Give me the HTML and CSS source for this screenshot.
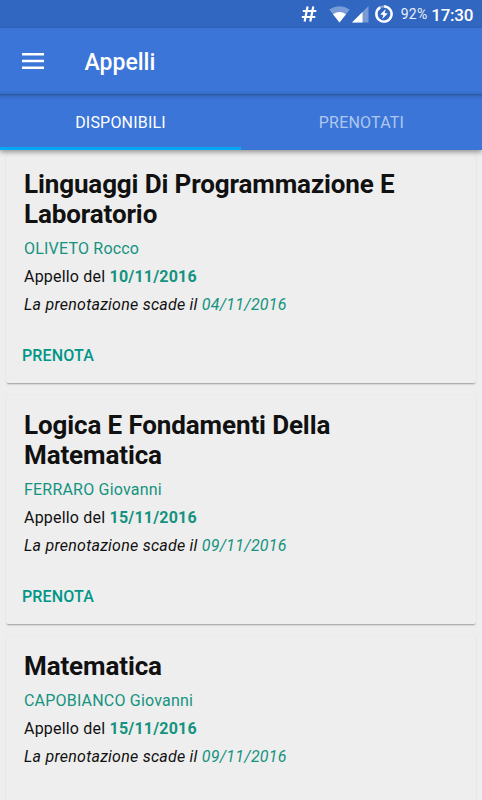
FILE: index.html
```html
<!DOCTYPE html>
<html lang="it">
<head>
    <meta charset="UTF-8">
    <meta name="viewport" content="width=device-width, initial-scale=1.0">
    <title>Appelli</title>
    <link rel="stylesheet" href="styles.css">
</head>
<body>
    <div class="status-bar">
        <svg class="icon-hash" width="16" height="18" viewBox="0 0 16 18">
            <path d="M6.6 1.5L3.6 16.5M12.3 1.5L9.3 16.5M1.8 6H15.3M.8 12H14.3" stroke="#fff" stroke-width="2.2" fill="none"/>
        </svg>
        <svg class="icon-wifi" width="21" height="17" viewBox="0 0 21 17">
            <path d="M10.5 16.5L.3 3.6Q10.5-3.2 20.7 3.6Z" fill="#fff" opacity=".35"/>
            <path d="M10.5 16.5L4 8.2Q10.5 4 17 8.2Z" fill="#fff"/>
        </svg>
        <svg class="icon-signal" width="17" height="17" viewBox="0 0 17 17">
            <path d="M0 16.5L16.5 0V16.5Z" fill="#fff" opacity=".35"/>
            <path d="M0 16.5L10.5 6V16.5Z" fill="#fff"/>
        </svg>
        <svg class="icon-battery" width="18" height="18" viewBox="0 0 18 18">
            <circle cx="9" cy="9" r="7.6" stroke="#fff" stroke-width="2.4" fill="none" opacity=".4"/>
            <path d="M9 1.4A7.6 7.6 0 1 1 5.2 2.4" stroke="#fff" stroke-width="2.4" fill="none"/>
            <path d="M10.8 4L5.2 9.6L8.3 10.1L7.2 14L12.8 8.4L9.7 7.9Z" fill="#fff"/>
        </svg>
        <span class="battery-level">92%</span>
        <span class="clock">17:30</span>
    </div>
    <header class="toolbar">
        <svg class="icon-menu" width="22" height="16" viewBox="0 0 22 16">
            <path d="M0 1.3H22M0 8H22M0 14.7H22" stroke="#fff" stroke-width="2.4"/>
        </svg>
        <h1>Appelli</h1>
    </header>
    <nav class="tabs">
        <div class="tab active">DISPONIBILI</div>
        <div class="tab">PRENOTATI</div>
    </nav>
    <main class="card-list">
        <div class="card">
            <h2>Linguaggi Di Programmazione E Laboratorio</h2>
            <p class="teacher">OLIVETO Rocco</p>
            <p>Appello del <b>10/11/2016</b></p>
            <p class="deadline">La prenotazione scade il <span>04/11/2016</span></p>
            <div class="action">PRENOTA</div>
        </div>
        <div class="card">
            <h2>Logica E Fondamenti Della Matematica</h2>
            <p class="teacher">FERRARO Giovanni</p>
            <p>Appello del <b>15/11/2016</b></p>
            <p class="deadline">La prenotazione scade il <span>09/11/2016</span></p>
            <div class="action">PRENOTA</div>
        </div>
        <div class="card last">
            <h2>Matematica</h2>
            <p class="teacher">CAPOBIANCO Giovanni</p>
            <p>Appello del <b>15/11/2016</b></p>
            <p class="deadline">La prenotazione scade il <span>09/11/2016</span></p>
        </div>
    </main>
</body>
</html>
```
FILE: styles.css
```css
body {
    display: flex;
    flex-direction: column;
    height: 800px;
    margin: 0;
    overflow: hidden;
    background-color: #eee;
    color: #111;
    font-family: Roboto, sans-serif;
}
h1, h2, p {
    margin: 0;
}
.status-bar {
    display: flex;
    flex: none;
    align-items: center;
    justify-content: flex-end;
    box-sizing: border-box;
    height: 28px;
    padding-right: 9px;
    background: linear-gradient(#3267c1 26px, #2f5fb3);
    color: #fff;
}
.icon-hash {
    margin-right: 12px;
}
.icon-wifi {
    margin-right: 2px;
}
.icon-signal {
    margin-right: 6px;
}
.icon-battery {
    margin-right: 8px;
}
.battery-level {
    margin-right: 4px;
    font-size: 14px;
    letter-spacing: 0.2px;
    opacity: 0.9;
}
.clock {
    padding-top: 1px;
    font-size: 17px;
    font-weight: 500;
    letter-spacing: -0.3px;
}
.toolbar {
    display: flex;
    flex: none;
    align-items: center;
    height: 66px;
    background-color: #3b75d8;
    color: #fff;
}
.icon-menu {
    margin: 0 40.5px 0 22px;
}
.toolbar h1 {
    padding-top: 2px;
    font-size: 23px;
    font-weight: 500;
}
.tabs {
    z-index: 1;
    display: flex;
    flex: none;
    height: 56px;
    background: linear-gradient(#2b5499, #3569c3 2px, #3b75d8 6px);
    box-shadow: 0 2px 5px rgba(0, 0, 0, 0.4);
}
.tab {
    flex: 1;
    box-sizing: border-box;
    border-bottom: 3px solid transparent;
    color: rgba(255, 255, 255, 0.6);
    font-size: 16px;
    letter-spacing: 0.2px;
    line-height: 58px;
    text-align: center;
}
.tab.active {
    border-color: #03a9f4;
    color: #fff;
}
.card-list {
    display: flex;
    flex-direction: column;
    gap: 12px;
    padding: 4px 6px 0;
}
.card {
    flex: none;
    box-sizing: border-box;
    padding: 15px 18px 12px;
    border-radius: 2px;
    background-color: #eee;
    box-shadow: 0 2px 2px -1px rgba(0, 0, 0, 0.35), 0 0 1px rgba(0, 0, 0, 0.12);
}
.card.last {
    padding-bottom: 65px;
}
.card h2 {
    margin-bottom: 6px;
    font-size: 26px;
    font-weight: 700;
    letter-spacing: -0.12px;
    line-height: 30px;
}
.card p {
    font-size: 16px;
    letter-spacing: 0.2px;
    line-height: 28px;
}
.card .teacher, .card b, .card span {
    color: #149380;
}
.card .deadline {
    font-style: italic;
    letter-spacing: 0.24px;
}
.action {
    margin: 21px 0 0 -2px;
    color: #009688;
    font-size: 16px;
    font-weight: 500;
    letter-spacing: 0.15px;
    line-height: 31px;
}
```
